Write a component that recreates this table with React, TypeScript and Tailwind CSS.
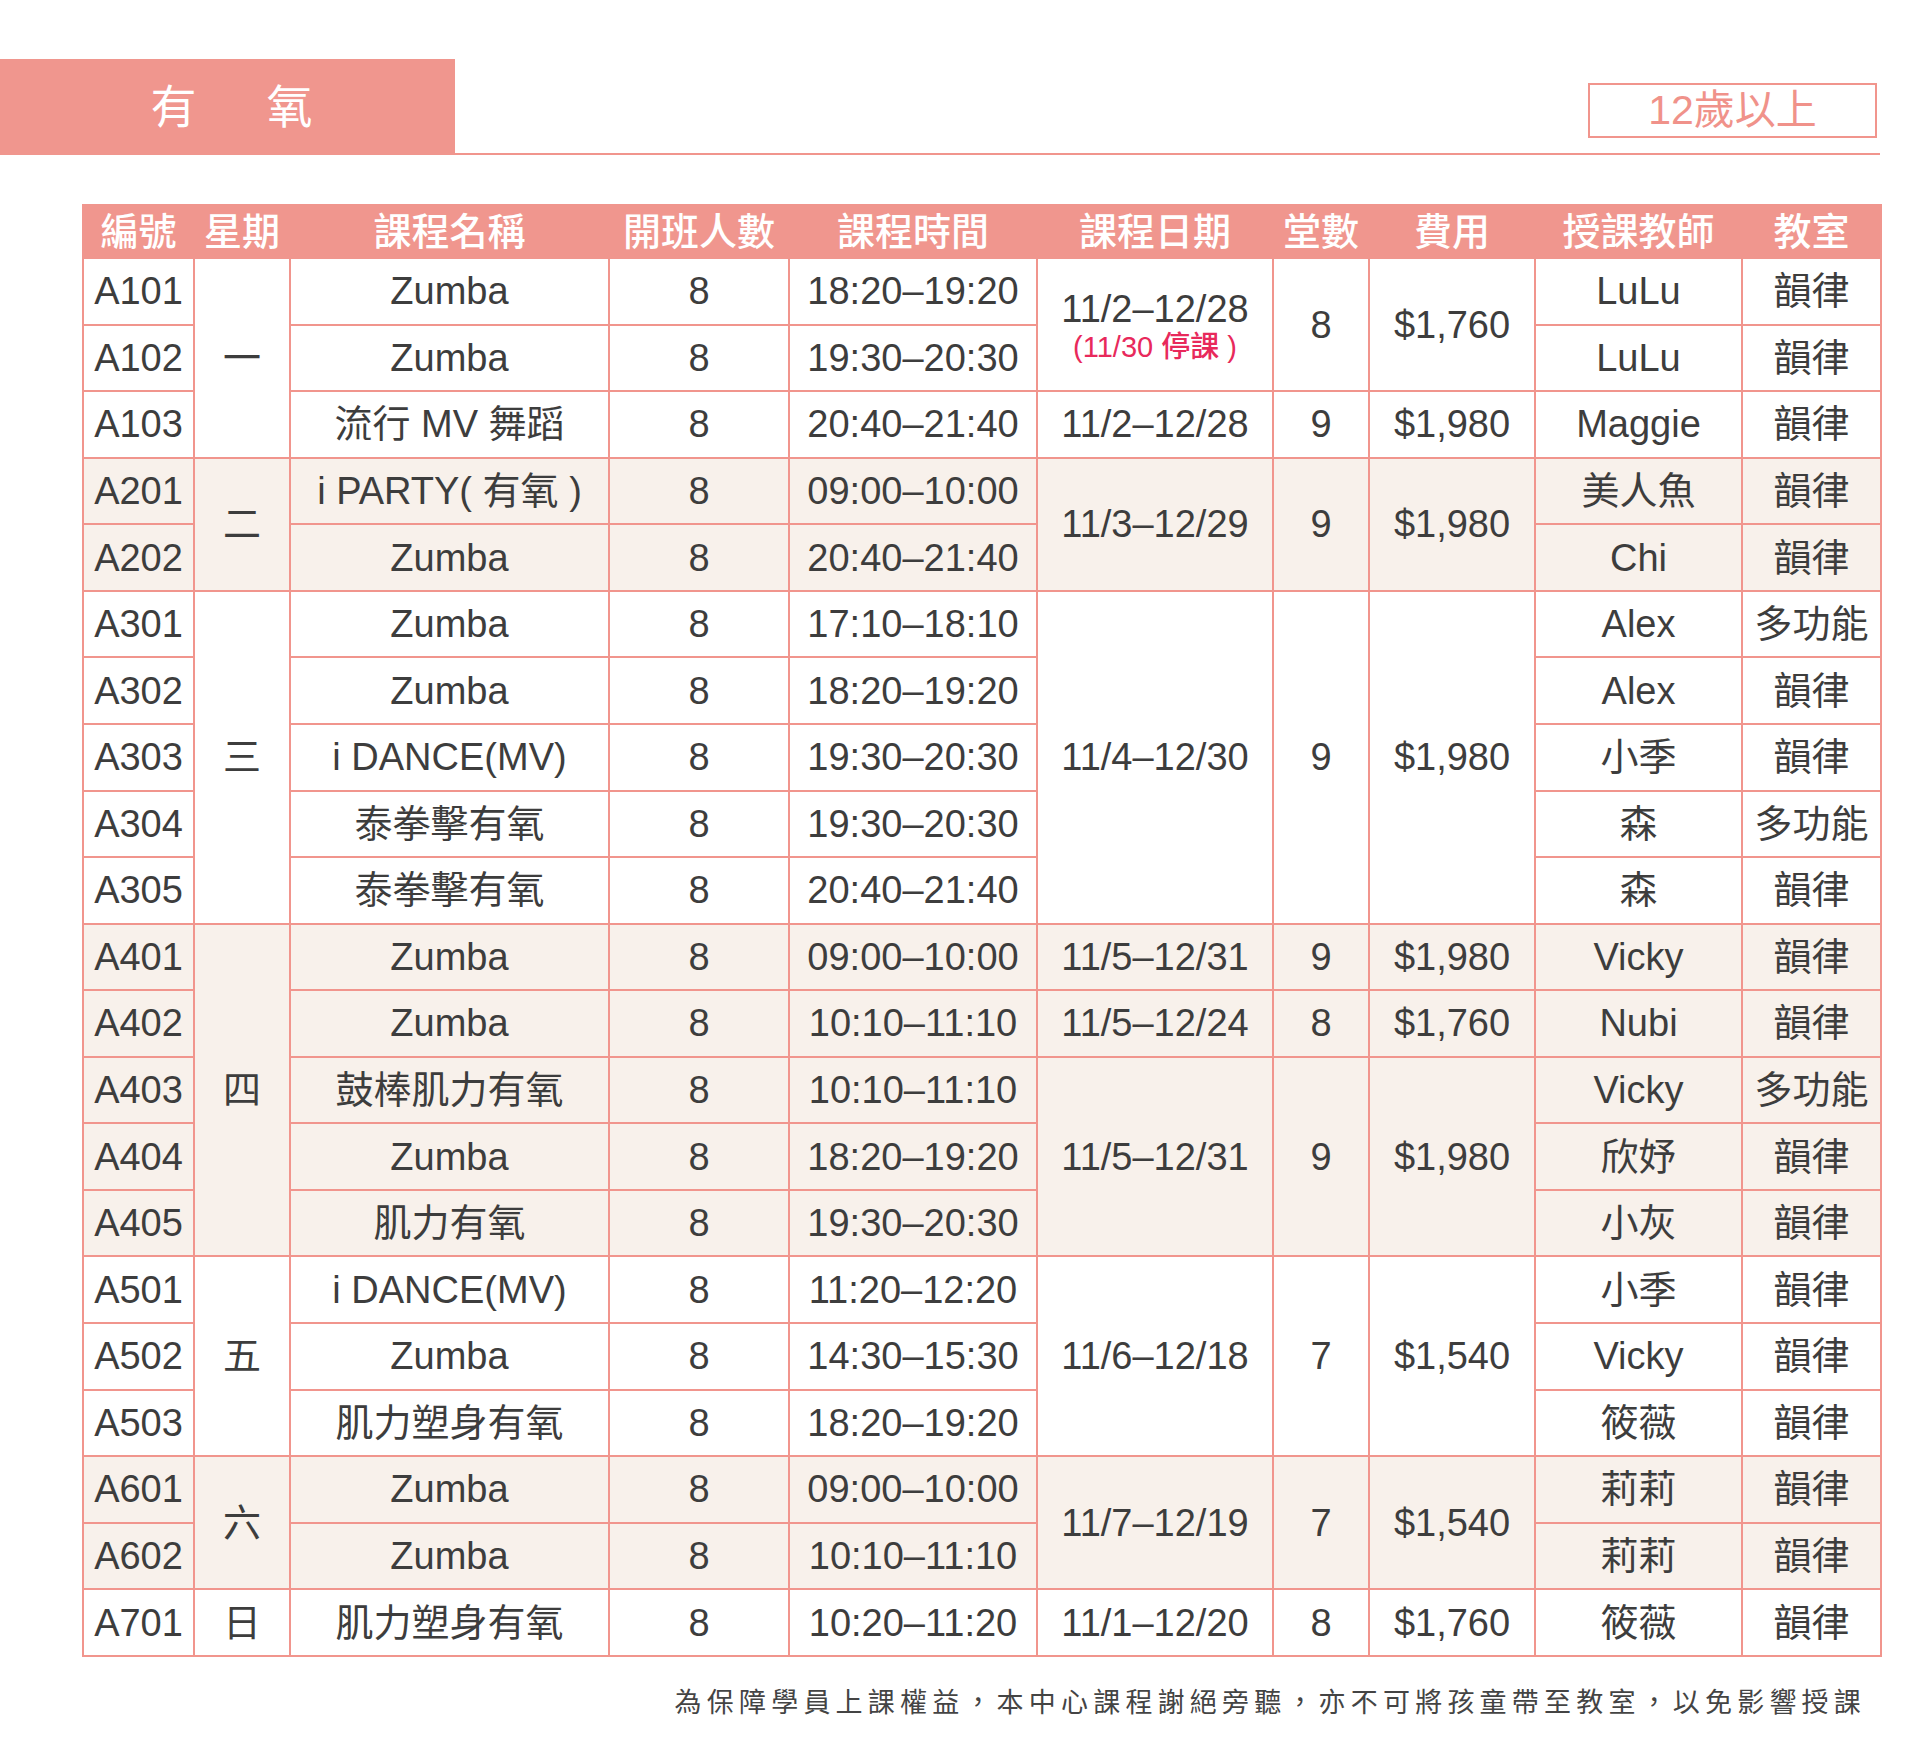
import React from 'react';

type Cell = { text: React.ReactNode; rs?: number };
type Row = { cells: Cell[]; shade: boolean };

const FONT = "font-['Liberation_Sans','Noto_Sans_CJK_TC',sans-serif]";

const c = (text: React.ReactNode, rs?: number): Cell => ({ text, rs });

// Each row lists only the cells that start in it (rowSpan cells appear once)
const ROWS: Row[] = [
  {
    shade: false,
    cells: [
      c('A101'), c('一', 3), c('Zumba'), c('8'), c('18:20–19:20'),
      c(
        <div className="flex flex-col items-center">
          <span>11/2–12/28</span>
          <span className="text-[29px] leading-[32px] text-[#e8295b] font-medium">(11/30 停課 )</span>
        </div>,
        2
      ),
      c('8', 2), c('$1,760', 2), c('LuLu'), c('韻律'),
    ],
  },
  { shade: false, cells: [c('A102'), c('Zumba'), c('8'), c('19:30–20:30'), c('LuLu'), c('韻律')] },
  {
    shade: false,
    cells: [c('A103'), c('流行 MV 舞蹈'), c('8'), c('20:40–21:40'), c('11/2–12/28'), c('9'), c('$1,980'), c('Maggie'), c('韻律')],
  },
  {
    shade: true,
    cells: [c('A201'), c('二', 2), c('i PARTY( 有氧 )'), c('8'), c('09:00–10:00'), c('11/3–12/29', 2), c('9', 2), c('$1,980', 2), c('美人魚'), c('韻律')],
  },
  { shade: true, cells: [c('A202'), c('Zumba'), c('8'), c('20:40–21:40'), c('Chi'), c('韻律')] },
  {
    shade: false,
    cells: [c('A301'), c('三', 5), c('Zumba'), c('8'), c('17:10–18:10'), c('11/4–12/30', 5), c('9', 5), c('$1,980', 5), c('Alex'), c('多功能')],
  },
  { shade: false, cells: [c('A302'), c('Zumba'), c('8'), c('18:20–19:20'), c('Alex'), c('韻律')] },
  { shade: false, cells: [c('A303'), c('i DANCE(MV)'), c('8'), c('19:30–20:30'), c('小季'), c('韻律')] },
  { shade: false, cells: [c('A304'), c('泰拳擊有氧'), c('8'), c('19:30–20:30'), c('森'), c('多功能')] },
  { shade: false, cells: [c('A305'), c('泰拳擊有氧'), c('8'), c('20:40–21:40'), c('森'), c('韻律')] },
  {
    shade: true,
    cells: [c('A401'), c('四', 5), c('Zumba'), c('8'), c('09:00–10:00'), c('11/5–12/31'), c('9'), c('$1,980'), c('Vicky'), c('韻律')],
  },
  {
    shade: true,
    cells: [c('A402'), c('Zumba'), c('8'), c('10:10–11:10'), c('11/5–12/24'), c('8'), c('$1,760'), c('Nubi'), c('韻律')],
  },
  {
    shade: true,
    cells: [c('A403'), c('鼓棒肌力有氧'), c('8'), c('10:10–11:10'), c('11/5–12/31', 3), c('9', 3), c('$1,980', 3), c('Vicky'), c('多功能')],
  },
  { shade: true, cells: [c('A404'), c('Zumba'), c('8'), c('18:20–19:20'), c('欣妤'), c('韻律')] },
  { shade: true, cells: [c('A405'), c('肌力有氧'), c('8'), c('19:30–20:30'), c('小灰'), c('韻律')] },
  {
    shade: false,
    cells: [c('A501'), c('五', 3), c('i DANCE(MV)'), c('8'), c('11:20–12:20'), c('11/6–12/18', 3), c('7', 3), c('$1,540', 3), c('小季'), c('韻律')],
  },
  { shade: false, cells: [c('A502'), c('Zumba'), c('8'), c('14:30–15:30'), c('Vicky'), c('韻律')] },
  { shade: false, cells: [c('A503'), c('肌力塑身有氧'), c('8'), c('18:20–19:20'), c('筱薇'), c('韻律')] },
  {
    shade: true,
    cells: [c('A601'), c('六', 2), c('Zumba'), c('8'), c('09:00–10:00'), c('11/7–12/19', 2), c('7', 2), c('$1,540', 2), c('莉莉'), c('韻律')],
  },
  { shade: true, cells: [c('A602'), c('Zumba'), c('8'), c('10:10–11:10'), c('莉莉'), c('韻律')] },
  {
    shade: false,
    cells: [c('A701'), c('日'), c('肌力塑身有氧'), c('8'), c('10:20–11:20'), c('11/1–12/20'), c('8'), c('$1,760'), c('筱薇'), c('韻律')],
  },
];

const HEADERS = ['編號', '星期', '課程名稱', '開班人數', '課程時間', '課程日期', '堂數', '費用', '授課教師', '教室'];
const WIDTHS = [111, 96, 319, 180, 248, 236, 96, 166, 207, 139];

export default function App() {
  return (
    <div className={`w-[1920px] h-[1750px] bg-white ${FONT} text-[#3d3d3d]`}>
      {/* Title bar */}
      <div className="flex pt-[59px] pr-[40px]">
        <div className="w-[455px] h-[96px] bg-[#f0968e] flex items-center justify-center gap-[70px] pl-[8px] text-white text-[46px] leading-none">
          <span>有</span>
          <span>氧</span>
        </div>
        <div className="flex-1 flex justify-end items-start pt-[24px] border-b-2 border-[#f1958d]">
          <div className="w-[289px] h-[55px] mr-[3px] border-2 border-[#f1958d] flex items-center justify-center text-[41px] leading-none text-[#f0928a]">
            12歲以上
          </div>
        </div>
      </div>

      {/* Schedule table */}
      <table className="ml-[82px] mt-[49px] table-fixed border-collapse w-[1798px]">
        <colgroup>
          {WIDTHS.map((w, i) => (
            <col key={i} style={{ width: w }} />
          ))}
        </colgroup>
        <thead>
          <tr className="h-[53px] bg-[#f0968e]">
            {HEADERS.map((h) => (
              <th key={h} className="border-2 border-[#f0968e] text-white text-[38px] leading-none font-medium p-0 text-center">
                {h}
              </th>
            ))}
          </tr>
        </thead>
        <tbody>
          {ROWS.map((row, ri) => (
            <tr key={ri} className={`h-[66.57px] ${row.shade ? 'bg-[#f8f1eb]' : 'bg-white'}`}>
              {row.cells.map((cell, ci) => (
                <td
                  key={ci}
                  rowSpan={cell.rs}
                  className="border-2 border-[#f1958d] text-center align-middle text-[38px] leading-[44px] p-0 whitespace-nowrap"
                >
                  {cell.text}
                </td>
              ))}
            </tr>
          ))}
        </tbody>
      </table>

      {/* Footer note */}
      <div className="w-[1880px] flex justify-end pr-[14px] mt-[30px]">
        <p className="text-[27px] leading-[32px] tracking-[5.2px] text-[#444]">
          為保障學員上課權益，本中心課程謝絕旁聽，亦不可將孩童帶至教室，以免影響授課
        </p>
      </div>
    </div>
  );
}
